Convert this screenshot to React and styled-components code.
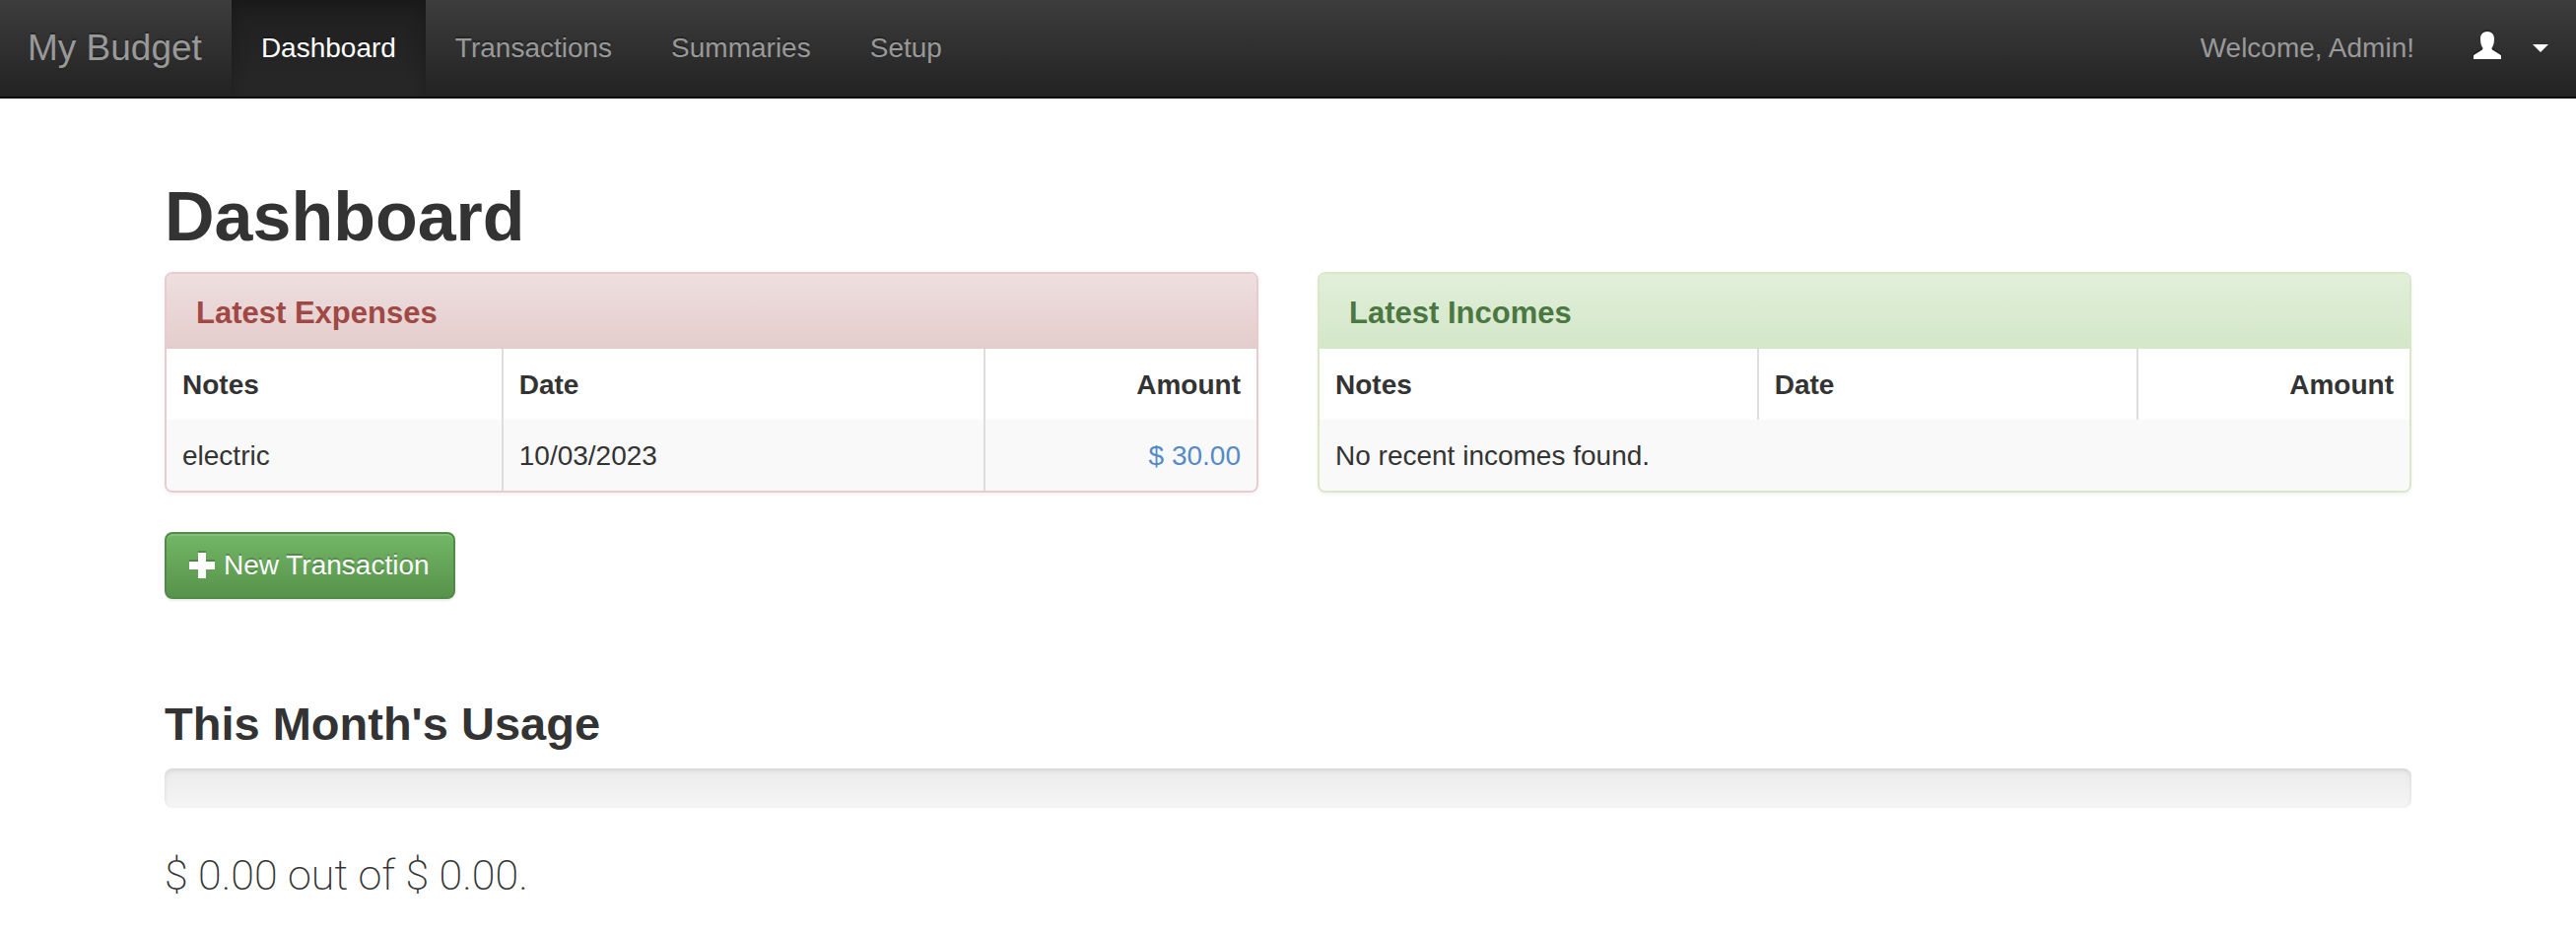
import React from "react";
import styled, { createGlobalStyle } from "styled-components";

const GlobalStyle = createGlobalStyle`
  *, *::before, *::after { box-sizing: border-box; }
  body {
    margin: 0;
    background: #fff;
    color: #333;
    font-family: "Helvetica Neue", "Liberation Sans", Arial, sans-serif;
    font-size: 28px;
    line-height: 40px;
  }
`;

const tones = {
  danger: { border: "#e6cccf", from: "#eedfdf", to: "#e4cccc", text: "#a04844" },
  success: { border: "#d9e7c8", from: "#e1efda", to: "#d4e7c8", text: "#4b7742" },
};

const Navbar = styled.nav`
  display: flex;
  align-items: stretch;
  height: 100px;
  border-bottom: 2px solid #0a0a0a;
  background: linear-gradient(to bottom, #3d3d3d, #222);
  text-shadow: 0 -2px 0 rgba(0, 0, 0, 0.25);
`;

const Brand = styled.a`
  display: flex;
  align-items: center;
  padding: 0 30px 0 28px;
  color: #999;
  font-size: 37px;
  text-decoration: none;
`;

const NavList = styled.ul`
  display: flex;
  margin: 0;
  padding: 0;
  list-style: none;
`;

const NavLink = styled.a`
  display: flex;
  align-items: center;
  height: 100%;
  padding: 0 30px;
  color: ${(p) => (p.$active ? "#fff" : "#999")};
  background: ${(p) => (p.$active ? "linear-gradient(to bottom, #1f1f1f, #282828)" : "none")};
  box-shadow: ${(p) => (p.$active ? "inset 0 6px 18px rgba(0, 0, 0, 0.25)" : "none")};
  text-decoration: none;
`;

const UserArea = styled.div`
  display: flex;
  align-items: center;
  gap: 60px;
  margin-left: auto;
  padding-right: 28px;
`;

const Welcome = styled.span`
  color: #999;
  text-shadow: none;
`;

const UserButton = styled.button`
  display: flex;
  align-items: center;
  gap: 32px;
  height: 100%;
  padding: 0;
  border: 0;
  background: none;
  color: #fff;
  cursor: pointer;
`;

const UserIcon = styled.svg`
  width: 28px;
  height: 28px;
  margin-bottom: 6px;
  fill: currentColor;
  filter: drop-shadow(0 -2px 0 rgba(0, 0, 0, 0.25));
`;

const Caret = styled.span`
  border-top: 8px solid currentColor;
  border-left: 8px solid transparent;
  border-right: 8px solid transparent;
`;

const Container = styled.main`
  max-width: 2340px;
  margin: 0 auto;
  padding: 80px 30px 26px;
`;

const PageTitle = styled.h1`
  margin: 0 0 16px;
  font-size: 70px;
  line-height: 80px;
`;

const Panels = styled.div`
  display: grid;
  grid-template-columns: 1fr 1fr;
  gap: 60px;
  margin-bottom: 40px;
`;

const Panel = styled.section`
  overflow: hidden;
  border: 2px solid ${(p) => tones[p.$tone].border};
  border-radius: 8px;
  box-shadow: 0 2px 4px rgba(0, 0, 0, 0.05);
`;

const PanelTitle = styled.h2`
  margin: 0;
  padding: 22px 30px 18px;
  background: linear-gradient(to bottom, ${(p) => tones[p.$tone].from}, ${(p) => tones[p.$tone].to});
  color: ${(p) => tones[p.$tone].text};
  font-size: 31px;
  line-height: 36px;
`;

const Table = styled.table`
  width: 100%;
  table-layout: fixed;
  border-collapse: separate;
  border-spacing: 0;

  th, td {
    height: 72px;
    padding: 17px 16px 15px;
    border-right: 2px solid #ddd;
    text-align: left;
  }
  th:last-child, td:last-child { border-right: 0; }
  td { background: #f9f9f9; }
`;

const Column = styled.col`
  width: ${(p) => p.$share};
`;

const AmountHead = styled.th`
  && { text-align: right; }
`;

const AmountCell = styled.td`
  && { text-align: right; }
`;

const AmountLink = styled.a`
  color: #548bc7;
  text-decoration: none;
`;

const NewButton = styled.button`
  display: flex;
  align-items: center;
  gap: 8px;
  height: 68px;
  padding: 0 24px 0 22px;
  border: 2px solid #528b47;
  border-radius: 8px;
  background: linear-gradient(to bottom, #73b667, #57934a);
  box-shadow: inset 0 2px 0 rgba(255, 255, 255, 0.15), 0 2px 2px rgba(0, 0, 0, 0.075);
  color: #fff;
  font: inherit;
  text-shadow: 0 -2px 0 rgba(0, 0, 0, 0.2);
  cursor: pointer;
`;

const PlusIcon = styled.svg`
  width: 28px;
  height: 28px;
  fill: currentColor;
  filter: drop-shadow(0 -2px 0 rgba(0, 0, 0, 0.2));
`;

const SectionTitle = styled.h2`
  margin: 100px 0 18px;
  font-size: 47px;
  line-height: 54px;
`;

const Progress = styled.div`
  height: 40px;
  margin-bottom: 38px;
  border-radius: 8px;
  background: linear-gradient(to bottom, #ebebeb, #f5f5f5);
  box-shadow: inset 0 2px 4px rgba(0, 0, 0, 0.1);
`;

const Lead = styled.p`
  margin: 0;
  font-family: Roboto, "Liberation Sans", sans-serif;
  font-size: 43px;
  font-weight: 200;
  line-height: 60px;
`;

function DataPanel({ tone, title, shares, children }) {
  return (
    <Panel $tone={tone}>
      <PanelTitle $tone={tone}>{title}</PanelTitle>
      <Table>
        <colgroup>
          {shares.map((share, i) => (
            <Column key={i} $share={share} />
          ))}
        </colgroup>
        <thead>
          <tr>
            <th scope="col">Notes</th>
            <th scope="col">Date</th>
            <AmountHead scope="col">Amount</AmountHead>
          </tr>
        </thead>
        <tbody>{children}</tbody>
      </Table>
    </Panel>
  );
}

const links = ["Dashboard", "Transactions", "Summaries", "Setup"];

export default function App() {
  return (
    <>
      <GlobalStyle />
      <Navbar>
        <Brand href="#">My Budget</Brand>
        <NavList>
          {links.map((label, i) => (
            <li key={label}>
              <NavLink href="#" $active={i === 0} aria-current={i === 0 ? "page" : undefined}>
                {label}
              </NavLink>
            </li>
          ))}
        </NavList>
        <UserArea>
          <Welcome>Welcome, Admin!</Welcome>
          <UserButton type="button" aria-label="Account menu" aria-haspopup="true">
            <UserIcon viewBox="0 0 28 28" aria-hidden="true">
              <path d="M14 0C9.6 0 7 2.8 7 7.4c0 4 .8 6.900 2.200 8.900.5.9.3 1.900-.6 2.500L1.300 23.200C.4 23.700 0 24.200 0 25v3h28v-3c0-.8-.4-1.300-1.300-1.800L19.400 18.800c-.9-.6-1.100-1.600-.6-2.500 1.400-2 2.200-4.900 2.200-8.900C21 2.800 18.400 0 14 0z" />
            </UserIcon>
            <Caret />
          </UserButton>
        </UserArea>
      </Navbar>
      <Container>
        <PageTitle>Dashboard</PageTitle>
        <Panels>
          <DataPanel tone="danger" title="Latest Expenses" shares={["30.9%", "44.2%", "24.9%"]}>
            <tr>
              <td>electric</td>
              <td>10/03/2023</td>
              <AmountCell>
                <AmountLink href="#">$ 30.00</AmountLink>
              </AmountCell>
            </tr>
          </DataPanel>
          <DataPanel tone="success" title="Latest Incomes" shares={["40.3%", "34.8%", "24.9%"]}>
            <tr>
              <td colSpan={3}>No recent incomes found.</td>
            </tr>
          </DataPanel>
        </Panels>
        <NewButton type="button">
          <PlusIcon viewBox="0 0 28 28" aria-hidden="true">
            <path d="M10 1h8v9h9v8h-9v9h-8v-9H1v-8h9z" />
          </PlusIcon>
          New Transaction
        </NewButton>
        <SectionTitle>This Month's Usage</SectionTitle>
        <Progress role="progressbar" aria-label="This month's usage" aria-valuenow={0} aria-valuemin={0} aria-valuemax={100} />
        <Lead>$ 0.00 out of $ 0.00.</Lead>
      </Container>
    </>
  );
}
